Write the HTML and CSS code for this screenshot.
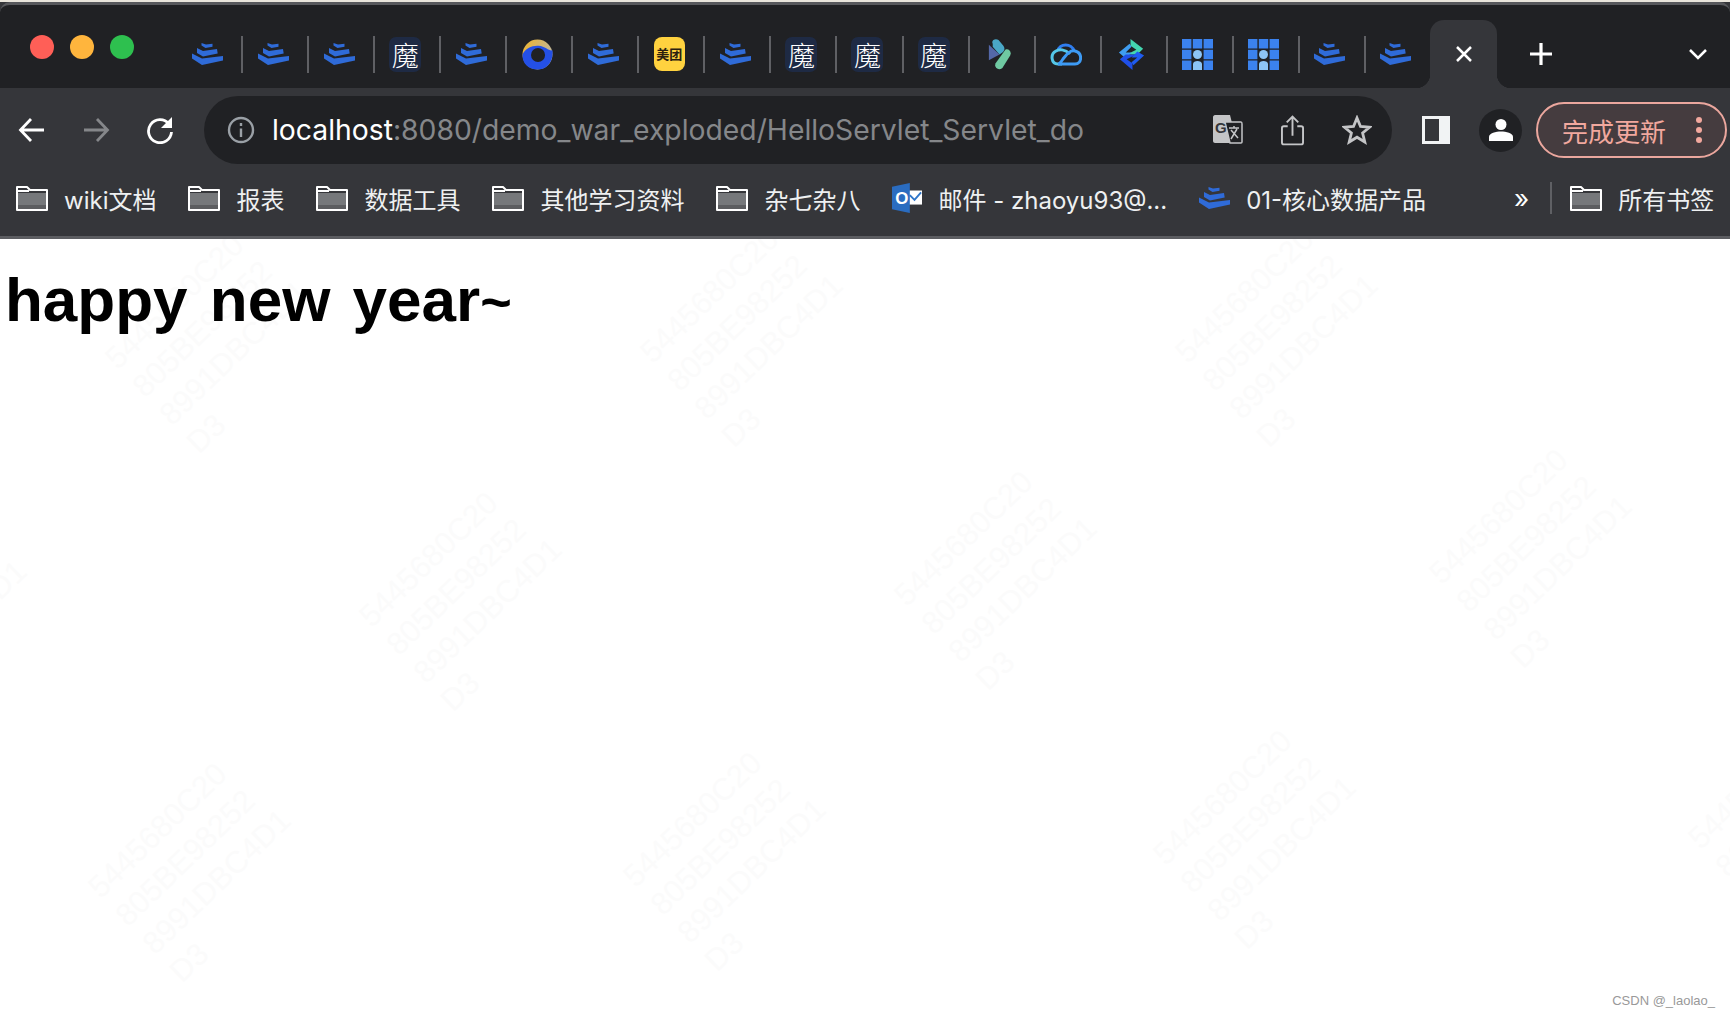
FILE: index.html
```html
<!DOCTYPE html>
<html lang="zh-CN">
<head>
    <meta charset="UTF-8">
    <title>localhost:8080/demo_war_exploded/HelloServlet_Servlet_do</title>
    <link rel="stylesheet" href="styles.css">
</head>
<body>
    <svg class="defs" width="0" height="0">
        <symbol id="stack" viewBox="0 0 31 22">
            <path fill="#2f6bd8" d="M9.500 0 14 1.500 20.500 .8V3.700L13.500 5 9.500 2.500zM5 5 11 8 25 6 25.700 10.500 11 13.500 5 10zM0 10.500 10 15.500 31 13V17.500L10 22 0 15.500z"/>
        </symbol>
        <symbol id="folder" viewBox="0 0 32 26">
            <path fill="#76787b" d="M2 8H30V24H2z"/>
            <path fill="#5c5d60" d="M2 20H30V24H2z"/>
            <path fill="none" stroke="#fff" stroke-width="2" stroke-linejoin="round" d="M1 2H11L14 5H31V25H1zM1 6H13"/>
        </symbol>
        <symbol id="grid" viewBox="0 0 31 31">
            <path fill="#3b82ee" d="M0 0H9.400V9.400H0zM10.800 0H20.200V9.400H10.800zM21.600 0H31V9.400H21.600zM0 10.800H9.400V20.200H0zM21.600 10.800H31V20.200H21.600zM0 21.600H9.400V31H0zM21.600 21.600H31V31H21.600z"/>
            <circle cx="15.500" cy="15.500" r="4.500" fill="#8cc4f5"/>
            <path fill="#8cc4f5" d="M11 31V25C11 21 20 21 20 25V31z"/>
        </symbol>
    </svg>

    <div class="top-edge"></div>

    <header class="chrome">
        <div class="tabstrip">
            <div class="lights">
                <span class="light red"></span>
                <span class="light yellow"></span>
                <span class="light green"></span>
            </div>
            <div class="tabs">
                <div class="tab"><svg class="stack"><use href="#stack"/></svg></div>
                <div class="tab"><svg class="stack"><use href="#stack"/></svg></div>
                <div class="tab"><svg class="stack"><use href="#stack"/></svg></div>
                <div class="tab"><span class="mo">魔</span></div>
                <div class="tab"><svg class="stack"><use href="#stack"/></svg></div>
                <div class="tab">
                    <svg class="fav" viewBox="0 0 30 30">
                        <defs>
                            <linearGradient id="ringTop" x1="0" y1="0" x2="1" y2="0.600">
                                <stop offset="0" stop-color="#f0b429"/>
                                <stop offset="1" stop-color="#b9b6a8"/>
                            </linearGradient>
                        </defs>
                        <circle cx="15" cy="15" r="14.500" fill="url(#ringTop)"/>
                        <path fill="#2450e6" d="M.5 15C3 9 10 6 16 6.500 23 7 26 12 29.500 11 30.500 22 24 29.500 15 29.500 6 29.500 0 23 .5 15z"/>
                        <circle cx="15.500" cy="15.500" r="6.800" fill="#202124"/>
                    </svg>
                </div>
                <div class="tab"><svg class="stack"><use href="#stack"/></svg></div>
                <div class="tab"><span class="meituan">美团</span></div>
                <div class="tab"><svg class="stack"><use href="#stack"/></svg></div>
                <div class="tab"><span class="mo">魔</span></div>
                <div class="tab"><span class="mo">魔</span></div>
                <div class="tab"><span class="mo">魔</span></div>
                <div class="tab">
                    <svg class="fav" viewBox="0 0 24 32">
                        <path fill="#4aa8c7" d="M5 5C3 1 8-1 11 1L16 7C18 10 17 12 15 14L12 16 5 8z"/>
                        <path fill="#5468a8" d="M1 6 12 16 1 22z"/>
                        <path fill="#6fc9a2" d="M8 25 18 11C21 9 25 13 23 17L15 30C11 33 6 30 8 25z"/>
                    </svg>
                </div>
                <div class="tab">
                    <svg class="cloud" viewBox="0 0 32 24">
                        <path fill="none" stroke="#2f7df0" stroke-width="3" d="M8 9C9 1 22 1 24 9"/>
                        <path fill="none" stroke="#54c7e8" stroke-width="3" d="M20 12C15 7 9 7 6 9 0 12 1 22 8 22H12"/>
                        <path fill="none" stroke="#3d9bf5" stroke-width="3" d="M8 22H25C32 22 33 11 25 9 20 8 17 12 13 17 11 20 9 22 8 22"/>
                    </svg>
                </div>
                <div class="tab">
                    <svg class="fav" viewBox="0 0 28 32">
                        <path fill="#43d6b0" d="M13 0 26 10 20 16 9 16 19 11 13 7z"/>
                        <path fill="#3f9df0" d="M1 14 12 5 14 8 8 14 14 14 8 20z"/>
                        <path fill="#1f5cf0" d="M27 17 16 27 14 24 20 19 14 19 20 13z"/>
                        <path fill="#1f4fe8" d="M15 32 2 21 8 16 19 16 9 21 15 25z"/>
                    </svg>
                </div>
                <div class="tab"><svg class="fav"><use href="#grid"/></svg></div>
                <div class="tab"><svg class="fav"><use href="#grid"/></svg></div>
                <div class="tab"><svg class="stack"><use href="#stack"/></svg></div>
                <div class="tab last"><svg class="stack"><use href="#stack"/></svg></div>
            </div>
            <div class="tab-active">
                <svg class="close" viewBox="0 0 16 16"><path d="M1 1 15 15M15 1 1 15"/></svg>
            </div>
            <svg class="plus" viewBox="0 0 24 24"><path d="M12 1V23M1 12H23"/></svg>
            <svg class="chevron" viewBox="0 0 18 11"><path d="M1 1 9 9 17 1"/></svg>
        </div>

        <div class="toolbar">
            <svg class="nav-icon" viewBox="0 0 28 28"><path d="M26 14H3M13 3 2.500 14 13 25"/></svg>
            <svg class="nav-icon dim" viewBox="0 0 28 28"><path d="M2 14H25M15 3 25.500 14 15 25"/></svg>
            <svg class="nav-icon" viewBox="0 0 28 28">
                <path d="M23 8A11.500 11.500 0 1 0 25.500 16"/>
                <path class="solid" d="M26 1V12H15z"/>
            </svg>
            <div class="omnibox">
                <svg class="info" viewBox="0 0 28 28">
                    <circle cx="14" cy="14" r="12"/>
                    <path d="M14 12.500V21M14 7V10"/>
                </svg>
                <div class="url"><span class="host">localhost</span>:8080/demo_war_exploded/HelloServlet_Servlet_do</div>
                <svg class="translate" viewBox="0 0 30 30">
                    <path fill="#c4c5c7" d="M2 0H17L24 28H2C1 28 0 27 0 26V2C0 1 1 0 2 0z"/>
                    <path fill="#202124" stroke="#c4c5c7" stroke-width="1.500" d="M12 7H28C29 7 29 8 29 9V27C29 28 29 28 28 28H17z"/>
                    <text x="2" y="18" class="translate-g">G</text>
                    <path fill="none" stroke="#c4c5c7" stroke-width="1.500" d="M16 13H26M21 11V13M18 24 24 14M18 15 25 23"/>
                </svg>
                <svg class="share" viewBox="0 0 24 32">
                    <path d="M7 12H3C2 12 1 13 1 14V29C1 30 2 31 3 31H21C22 31 23 30 23 29V14C23 13 22 12 21 12H17"/>
                    <path d="M12 22V2M6 8 12 2 18 8"/>
                </svg>
                <svg class="star" viewBox="0 0 30 30">
                    <path d="M15 3 18.500 11.500 27.500 12.200 20.600 18 22.800 27 15 22.200 7.200 27 9.400 18 2.500 12.200 11.500 11.500z"/>
                </svg>
            </div>
            <div class="side-panel"><span></span></div>
            <div class="avatar">
                <svg viewBox="0 0 24 24">
                    <circle cx="12" cy="6.500" r="5.500"/>
                    <path d="M0 23V19C0 15 7 13.500 12 13.500 17 13.500 24 15 24 19V23z"/>
                </svg>
            </div>
            <div class="update">
                <span>完成更新</span>
                <span class="dots"><i></i><i></i><i></i></span>
            </div>
        </div>

        <div class="bookmarks">
            <div class="bookmark"><svg class="folder"><use href="#folder"/></svg>wiki文档</div>
            <div class="bookmark"><svg class="folder"><use href="#folder"/></svg>报表</div>
            <div class="bookmark"><svg class="folder"><use href="#folder"/></svg>数据工具</div>
            <div class="bookmark"><svg class="folder"><use href="#folder"/></svg>其他学习资料</div>
            <div class="bookmark"><svg class="folder"><use href="#folder"/></svg>杂七杂八</div>
            <div class="bookmark">
                <svg class="outlook" viewBox="0 0 32 32">
                    <path fill="#fff" d="M17 8H32V23H17z"/>
                    <path fill="none" stroke="#2f76c9" stroke-width="2" d="M19 13 24 18 31 10"/>
                    <path fill="#2a6cc0" d="M0 4 19 0V32L0 28z"/>
                    <text x="3.500" y="22" class="outlook-o">O</text>
                </svg>
                邮件 - zhaoyu93@...
            </div>
            <div class="bookmark"><svg class="stack"><use href="#stack"/></svg>01-核心数据产品</div>
            <div class="more">»</div>
            <div class="divider"></div>
            <div class="bookmark all"><svg class="folder"><use href="#folder"/></svg>所有书签</div>
        </div>
    </header>

    <main class="page">
        <div class="marks">
            <div class="mark m0">5445680C20<br>805BE98252<br>8991DBC4D1<br>D3</div>
            <div class="mark m1">5445680C20<br>805BE98252<br>8991DBC4D1<br>D3</div>
            <div class="mark m2">5445680C20<br>805BE98252<br>8991DBC4D1<br>D3</div>
            <div class="mark m3">5445680C20<br>805BE98252<br>8991DBC4D1<br>D3</div>
            <div class="mark m4">5445680C20<br>805BE98252<br>8991DBC4D1<br>D3</div>
            <div class="mark m5">5445680C20<br>805BE98252<br>8991DBC4D1<br>D3</div>
            <div class="mark m6">5445680C20<br>805BE98252<br>8991DBC4D1<br>D3</div>
            <div class="mark m7">5445680C20<br>805BE98252<br>8991DBC4D1<br>D3</div>
            <div class="mark m8">5445680C20<br>805BE98252<br>8991DBC4D1<br>D3</div>
            <div class="mark m9">5445680C20<br>805BE98252<br>8991DBC4D1<br>D3</div>
            <div class="mark m10">5445680C20<br>805BE98252<br>8991DBC4D1<br>D3</div>
        </div>
        <h1>happy new year<span class="tilde">~</span></h1>
        <div class="credit">CSDN @_laolao_</div>
    </main>
</body>
</html>
```

FILE: styles.css
```css
/* base */
html, body {
    margin: 0;
    padding: 0;
    height: 100%;
}
body {
    display: flex;
    flex-direction: column;
    background-color: white;
    color: black;
    font-family: "Liberation Sans", Arial, sans-serif;
    overflow: hidden;
}
svg {
    display: block;
    flex-shrink: 0;
}
.defs {
    position: absolute;
}
.top-edge {
    height: 2px;
    background-color: #e9e5dc;
}

/* browser frame */
.chrome {
    background-color: #35363a;
    border-bottom: 3px solid #5c5d61;
    font-family: Inter, "Noto Sans CJK SC", sans-serif;
    color: white;
}
.tabstrip {
    display: flex;
    align-items: center;
    height: 86px;
    box-sizing: border-box;
    background-color: #202124;
    border-top: 3px solid #57585c;
    border-radius: 10px 10px 0 0;
    padding-left: 30px;
}
.lights {
    display: flex;
    gap: 16px;
    margin-right: 43px;
}
.light {
    width: 24px;
    height: 24px;
    border-radius: 50%;
}
.red { background-color: #ff5f57; }
.yellow { background-color: #ffb53d; }
.green { background-color: #2ec04f; }

.tabs {
    display: flex;
    width: 1253px;
    margin-top: 15px;
}
.tab {
    flex: 1;
    height: 37px;
    display: flex;
    align-items: center;
    justify-content: center;
    border-right: 2px solid #5f6064;
    box-sizing: border-box;
    padding-right: 4px;
}
.tab.last {
    border-right: none;
}
.stack {
    width: 31px;
    height: 22px;
}
.fav {
    width: 31px;
    height: 31px;
}
.cloud {
    width: 32px;
    height: 24px;
}
.mo {
    width: 32px;
    height: 35px;
    border-radius: 7px;
    background-color: #1e2a44;
    color: white;
    font-size: 27px;
    font-weight: 300;
    line-height: 35px;
    text-align: center;
    font-family: "Noto Sans CJK SC", sans-serif;
}
.meituan {
    width: 31px;
    height: 34px;
    border-radius: 8px;
    background-color: #ffd23f;
    color: #2a2010;
    font-size: 13px;
    font-weight: 700;
    line-height: 34px;
    text-align: center;
    white-space: nowrap;
    font-family: "Noto Sans CJK SC", sans-serif;
}
.tab-active {
    position: relative;
    align-self: flex-end;
    width: 67px;
    height: 68px;
    display: flex;
    align-items: center;
    justify-content: center;
    background-color: #35363a;
    border-radius: 14px 14px 0 0;
    box-sizing: border-box;
}
.tab-active::before,
.tab-active::after {
    content: "";
    position: absolute;
    bottom: 0;
    width: 14px;
    height: 14px;
}
.tab-active::before {
    left: -14px;
    background: radial-gradient(circle at 0 0, #202124 14px, #35363a 14.500px);
}
.tab-active::after {
    right: -14px;
    background: radial-gradient(circle at 100% 0, #202124 14px, #35363a 14.500px);
}
.close {
    width: 16px;
    height: 16px;
}
.close path,
.plus path,
.chevron path {
    fill: none;
    stroke: white;
    stroke-width: 2.500px;
}
.plus {
    width: 24px;
    height: 24px;
    margin-left: 32px;
    margin-top: 15px;
}
.plus path {
    stroke-width: 3.200px;
}
.chevron {
    width: 18px;
    height: 11px;
    margin-left: 136px;
    margin-top: 15px;
}

.toolbar {
    display: flex;
    align-items: center;
    height: 84px;
    padding-left: 18px;
    box-sizing: border-box;
}
.nav-icon {
    width: 28px;
    height: 28px;
    margin-right: 36px;
}
.nav-icon + .nav-icon + .nav-icon {
    margin-right: 0;
}
.nav-icon path {
    fill: none;
    stroke: white;
    stroke-width: 2.800px;
}
.nav-icon path.solid {
    fill: white;
    stroke: none;
}
.nav-icon.dim path {
    stroke: #85878a;
}
.omnibox {
    display: flex;
    align-items: center;
    width: 1188px;
    height: 68px;
    margin-left: 30px;
    padding-left: 23px;
    box-sizing: border-box;
    background-color: #202124;
    border-radius: 34px;
}
.info {
    width: 28px;
    height: 28px;
}
.info circle,
.info path {
    fill: none;
    stroke: #9aa0a6;
    stroke-width: 2.400px;
}
.url {
    flex: 1;
    margin-left: 17px;
    font-size: 28.300px;
    color: #85878a;
    white-space: nowrap;
}
.host {
    color: white;
}
.translate {
    width: 30px;
    height: 30px;
}
.translate-g {
    font-family: "Liberation Sans", sans-serif;
    font-size: 15px;
    font-weight: 700;
    fill: #35363a;
}
.share {
    width: 23px;
    height: 32px;
    margin-left: 38px;
}
.share path {
    fill: none;
    stroke: #c4c5c7;
    stroke-width: 2px;
}
.star {
    width: 30px;
    height: 30px;
    margin-left: 38px;
    margin-right: 20px;
}
.star path {
    fill: none;
    stroke: #c4c5c7;
    stroke-width: 2.800px;
}
.side-panel {
    width: 28px;
    height: 28px;
    margin-left: 30px;
    background-color: #f1f3f4;
    padding: 3px 11px 3px 3px;
    box-sizing: border-box;
}
.side-panel span {
    display: block;
    height: 100%;
    background-color: #35363a;
}
.avatar {
    width: 43px;
    height: 43px;
    margin-left: 29px;
    border-radius: 50%;
    background-color: #202124;
    display: flex;
    align-items: center;
    justify-content: center;
}
.avatar svg {
    width: 24px;
    height: 26px;
    fill: white;
}
.update {
    display: flex;
    align-items: center;
    justify-content: space-between;
    width: 191px;
    height: 56px;
    margin-left: 14px;
    padding: 0 23px 0 24px;
    box-sizing: border-box;
    background-color: #453c3f;
    border: 2px solid #eba79e;
    border-radius: 28px;
    color: #f2a89e;
    font-size: 26px;
}
.dots {
    display: flex;
    flex-direction: column;
    gap: 4px;
}
.dots i {
    width: 6px;
    height: 6px;
    border-radius: 50%;
    background-color: #f2a89e;
}

.bookmarks {
    display: flex;
    align-items: center;
    height: 64px;
    padding-left: 16px;
    padding-bottom: 12px;
    box-sizing: border-box;
    font-size: 24px;
    white-space: nowrap;
}
.bookmark {
    display: flex;
    align-items: center;
    gap: 16px;
    margin-right: 32px;
    color: #eef0f1;
}
.folder {
    width: 32px;
    height: 26px;
}
.outlook {
    width: 30px;
    height: 30px;
}
.outlook-o {
    font-family: "Liberation Sans", sans-serif;
    font-size: 18px;
    font-weight: 700;
    fill: white;
}
.more {
    margin-left: 56px;
    font-size: 26px;
}
.divider {
    width: 2px;
    height: 32px;
    margin-left: 21px;
    margin-right: 18px;
    background-color: #5f6064;
}
.bookmark.all {
    margin-right: 0;
}

/* page */
.page {
    position: relative;
    flex: 1;
    overflow: hidden;
}
h1 {
    position: relative;
    margin: 24px 0 0 5px;
    font-size: 62px;
    line-height: 74px;
    font-weight: 700;
    word-spacing: 5px;
}
.tilde {
    font-size: 54px;
}
.credit {
    position: absolute;
    right: 15px;
    bottom: 8px;
    font-size: 13px;
    color: #999;
}

/* watermark */
.mark {
    position: absolute;
    font-size: 31px;
    line-height: 39px;
    color: #fbfbfb;
    white-space: nowrap;
    transform: rotate(-44deg);
    transform-origin: 0 0;
}
.m0 { left: -184px; top: 390px; }
.m1 { left: 97px; top: 110px; }
.m2 { left: 632px; top: 104px; }
.m3 { left: 1167px; top: 104px; }
.m4 { left: 351px; top: 368px; }
.m5 { left: 886px; top: 347px; }
.m6 { left: 1421px; top: 325px; }
.m7 { left: 80px; top: 639px; }
.m8 { left: 615px; top: 628px; }
.m9 { left: 1145px; top: 606px; }
.m10 { left: 1680px; top: 590px; }
```
